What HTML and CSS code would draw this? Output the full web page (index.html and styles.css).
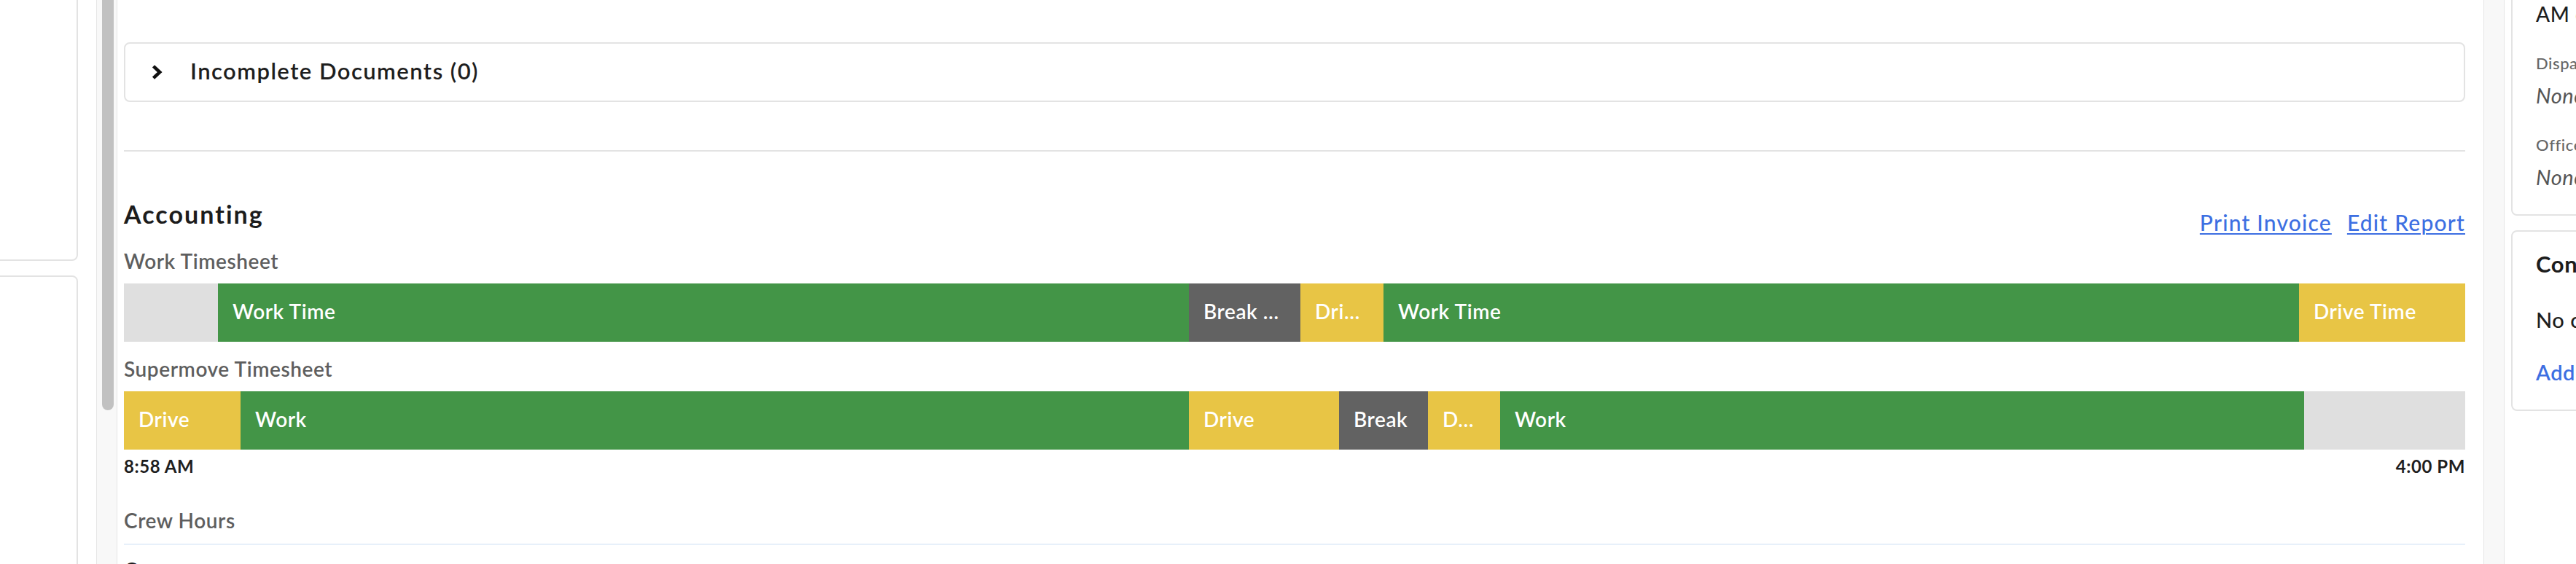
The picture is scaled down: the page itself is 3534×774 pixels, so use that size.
FILE: index.html
```html
<!DOCTYPE html>
<html lang="en">
<head>
<meta charset="utf-8">
<title>Job Report</title>
<link rel="stylesheet" href="styles.css">
</head>
<body>
<div class="app">
  <aside class="left">
    <div class="left-cards">
      <div class="lcard lcard-a"></div>
      <div class="lcard lcard-b"></div>
    </div>
    <div class="track"><div class="thumb"></div></div>
  </aside>

  <main class="main">
    <div class="doc-card">
      <svg class="chev" width="15" height="22" viewBox="0 0 15 22" aria-hidden="true"><path d="M2.5 2.8 L11.2 11 L2.5 19.2" fill="none" stroke="#111" stroke-width="4.6"/></svg>
      <span class="doc-title">Incomplete Documents (0)</span>
    </div>

    <div class="sep"></div>

    <div class="acc-head">
      <h2 class="acc-title">Accounting</h2>
      <div class="links">
        <a class="link" href="#">Print Invoice</a>
        <a class="link" href="#">Edit Report</a>
      </div>
    </div>

    <div class="ts-label ts-first">Work Timesheet</div>
    <div class="bar">
      <div class="seg seg-empty" style="width:4.0162%"></div>
      <div class="seg seg-work" style="width:41.4695%">Work Time</div>
      <div class="seg seg-break" style="width:4.7634%" title="Break Time">Break …</div>
      <div class="seg seg-drive" style="width:3.5492%" title="Drive Time">Dri…</div>
      <div class="seg seg-work" style="width:39.1034%">Work Time</div>
      <div class="seg seg-drive" style="width:7.0983%">Drive Time</div>
    </div>

    <div class="ts-label ts-second">Supermove Timesheet</div>
    <div class="bar">
      <div class="seg seg-drive" style="width:4.9813%">Drive</div>
      <div class="seg seg-work" style="width:40.5044%">Work</div>
      <div class="seg seg-drive" style="width:6.4134%">Drive</div>
      <div class="seg seg-break" style="width:3.7983%">Break</div>
      <div class="seg seg-drive" style="width:3.0822%" title="Drive">D…</div>
      <div class="seg seg-work" style="width:34.3400%">Work</div>
      <div class="seg seg-empty" style="width:6.8804%"></div>
    </div>

    <div class="times"><span>8:58 AM</span><span>4:00 PM</span></div>

    <div class="ts-label crew-label">Crew Hours</div>
    <div class="crew-line"></div>
    <div class="crew-row">Crew</div>
  </main>

  <div class="track track-r"></div>

  <aside class="right">
    <div class="rcard rcard-a">
      <div class="rc-line1">AM or later</div>
      <div class="rc-label">Dispatch Notes</div>
      <div class="rc-value">None</div>
      <div class="rc-label">Office Notes</div>
      <div class="rc-value">None</div>
    </div>
    <div class="rcard rcard-b">
      <div class="rc-title">Containers</div>
      <div class="rc-text">No containers assigned</div>
      <a class="rc-add" href="#">Add Container</a>
    </div>
  </aside>
</div>
</body>
</html>
```

FILE: styles.css
```css
html, body {
  margin: 0;
  padding: 0;
  background: #ffffff;
  overflow: hidden;
}

body {
  font-family: Lato, "Open Sans", "Noto Sans", sans-serif;
  letter-spacing: 0.036em;
  color: #222222;
}

.app {
  display: flex;
  width: 3534px;
  height: 774px;
  overflow: hidden;
}

/* ---------- left column ---------- */
.left {
  flex: 0 0 161px;
  min-width: 0;
  overflow: hidden;
  display: flex;
}

.left-cards {
  flex: 1 1 0;
  min-width: 0;
  display: flex;
  flex-direction: column;
  align-items: flex-end;
  overflow: hidden;
  margin-top: -40px;
}

.lcard {
  flex: none;
  width: 400px;
  margin-right: 25px;
  box-sizing: border-box;
  border: 2px solid #e3e3e3;
  border-radius: 8px;
  background: #ffffff;
}

.lcard-a { height: 398px; }
.lcard-b { height: 600px; margin-top: 20px; }

.track {
  flex: 0 0 29px;
  box-sizing: border-box;
  border-left: 1px solid #e6e6e6;
  border-right: 1px solid #e6e6e6;
  background: #f8f8f8;
  display: flex;
  align-items: flex-start;
  padding-left: 7px;
  overflow: hidden;
}

.thumb {
  flex: none;
  width: 16px;
  height: 600px;
  margin-top: -37px;
  border-radius: 8px;
  background: #c1c1c1;
}

/* ---------- main column ---------- */
.main {
  flex: 0 0 3246px;
  min-width: 0;
  box-sizing: border-box;
  padding: 58px 25px 0 9px;
  display: flex;
  flex-direction: column;
}

.doc-card {
  flex: none;
  height: 82px;
  box-sizing: border-box;
  border: 2px solid #e3e3e3;
  border-radius: 8px;
  display: flex;
  align-items: center;
  padding-left: 36px;
}

.chev { flex: none; display: block; }

.doc-title {
  margin-left: 38px;
  margin-bottom: 4px;
  font-size: 31px;
  line-height: 36px;
  font-weight: 600;
  letter-spacing: 0.047em;
  color: #1e1e1e;
}

.sep {
  flex: none;
  height: 2px;
  margin-top: 66px;
  background: #e3e3e3;
}

.acc-head {
  display: flex;
  justify-content: space-between;
  align-items: flex-start;
  margin-top: 66px;
}

.acc-title {
  margin: 0;
  font-size: 34px;
  line-height: 40px;
  font-weight: 700;
  letter-spacing: 0.06em;
  color: #1c1c1c;
}

.links {
  display: flex;
  gap: 21px;
  margin-top: 13px;
}

.link {
  font-size: 30px;
  line-height: 36px;
  font-weight: 500;
  letter-spacing: 0.04em;
  color: #3d6fe2;
  text-decoration: underline;
  text-decoration-thickness: 2px;
  text-underline-offset: 3px;
}

.ts-label {
  font-size: 28px;
  line-height: 34px;
  font-weight: 600;
  color: #5e5e5e;
}

.ts-first { margin-top: 18px; }
.ts-second { margin-top: 20px; }

.bar {
  flex: none;
  display: flex;
  height: 80px;
  margin-top: 14px;
}

.seg {
  flex: none;
  height: 80px;
  box-sizing: border-box;
  padding: 0 20px;
  font-size: 28px;
  line-height: 76px;
  font-weight: 600;
  color: #ffffff;
  white-space: nowrap;
  overflow: hidden;
  text-overflow: ellipsis;
}

.seg-empty { background: #dfdfdf; }
.seg-work { background: #439547; }
.seg-drive { background: #e8c545; }
.seg-break { background: #626262; }

.times {
  display: flex;
  justify-content: space-between;
  margin-top: 9px;
  font-size: 24px;
  line-height: 28px;
  font-weight: 700;
  color: #1e1e1e;
}

.crew-label { margin-top: 43px; }

.crew-line {
  flex: none;
  height: 2px;
  margin-top: 15px;
  background: #e7f0fa;
}

.crew-row {
  margin-top: 17px;
  font-size: 28px;
  line-height: 34px;
  font-weight: 700;
  color: #1e1e1e;
}

/* ---------- right column ---------- */
.track-r { padding-left: 0; }

.right {
  flex: 0 0 600px;
  min-width: 0;
  box-sizing: border-box;
  padding-left: 9px;
  margin-top: -40px;
  display: flex;
  flex-direction: column;
  align-items: flex-start;
}

.rcard {
  width: 540px;
  box-sizing: border-box;
  border: 2px solid #e3e3e3;
  border-radius: 8px;
  padding: 0 32px;
  background: #ffffff;
  white-space: nowrap;
}

.rcard-a { padding-top: 40px; padding-bottom: 34px; }
.rcard-b { margin-top: 20px; padding-top: 26px; padding-bottom: 34px; display: flex; flex-direction: column; align-items: flex-start; }

.rc-line1 {
  font-size: 28px;
  line-height: 34px;
  font-weight: 500;
  color: #1e1e1e;
}

.rc-label {
  margin-top: 38px;
  font-size: 22px;
  line-height: 26px;
  font-weight: 500;
  color: #666666;
}

.rc-value {
  margin-top: 14px;
  font-size: 29px;
  line-height: 34px;
  font-style: italic;
  color: #555555;
}

.rc-title {
  font-size: 31px;
  line-height: 36px;
  font-weight: 700;
  color: #1c1c1c;
}

.rc-text {
  margin-top: 42px;
  font-size: 29px;
  line-height: 34px;
  font-weight: 500;
  color: #1e1e1e;
}

.rc-add {
  margin-top: 38px;
  font-size: 29px;
  line-height: 34px;
  font-weight: 600;
  color: #3d6fe2;
  text-decoration: none;
}
```
